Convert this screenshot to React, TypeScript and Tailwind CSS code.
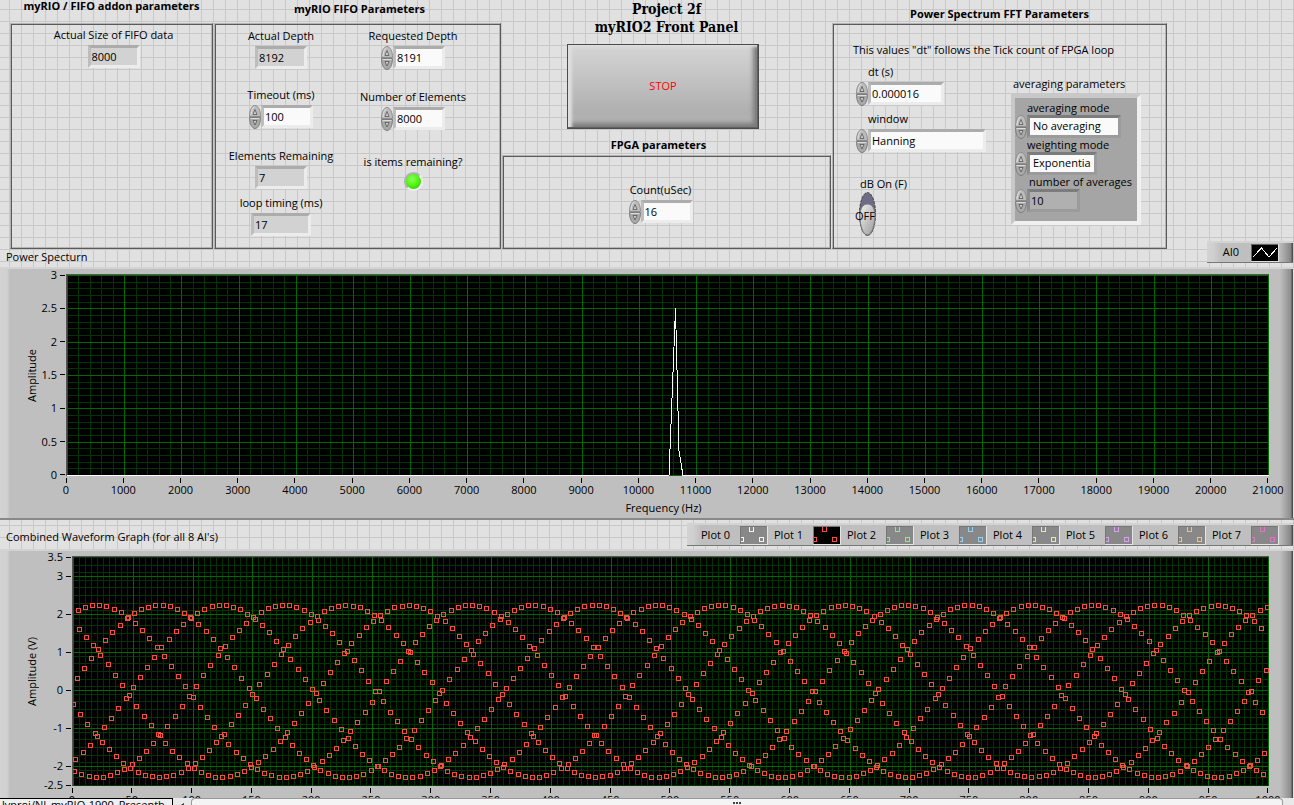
import { Fragment, useState } from 'react';
import type { ReactNode } from 'react';
import clsx from 'clsx';

const BEVEL = 'border-[3px] border-t-[#acacac] border-l-[#bdbdbd] border-r-[#ececec] border-b-[#ececec]';
const BEVEL_DARK = 'border-[3px] border-t-[#7c7c7c] border-l-[#8c8c8c] border-r-[#9b9b9b] border-b-[#9b9b9b]';

// ---------- controls ----------

function Spinner({ name }: { name: string }) {
  return (
    <span className="flex w-3 shrink-0 flex-col">
      <button aria-label={`Increase ${name}`} className="block h-3 w-3">
        <svg viewBox="0 0 12 12" className="block h-3 w-3">
          <path d="M.5 11.5C.5 5 3 .5 6 .5s5.500 4.500 5.500 11z" fill="#bcbcbc" stroke="#8d8d8d" />
          <path d="M2 10C2.300 5 4 2 5.500 1.800" fill="none" stroke="#e2e2e2" />
          <path d="M4 9.500 6 4.500 8 9.500z" fill="#cfcfcf" stroke="#555" strokeWidth=".8" />
        </svg>
      </button>
      <button aria-label={`Decrease ${name}`} className="block h-3 w-3">
        <svg viewBox="0 0 12 12" className="block h-3 w-3">
          <path d="M.5 .5C.5 7 3 11.500 6 11.500S11.500 7 11.500 .5z" fill="#a9a9a9" stroke="#7d7d7d" />
          <path d="M1.500 1.500h9" stroke="#dcdcdc" />
          <path d="M4 3.500 6 8 8 3.500z" fill="#cfcfcf" stroke="#555" strokeWidth=".8" />
        </svg>
      </button>
    </span>
  );
}

type FieldProps = {
  id: string;
  label: string;
  value: string;
  width?: string;
  spin?: boolean;
  readOnly?: boolean;
  className?: string;
};

function Field({ id, label, value, width = 'w-[52px]', spin, readOnly, className }: FieldProps) {
  const [text, setText] = useState(value);
  return (
    <div className={clsx('flex flex-col', className ?? 'items-center')}>
      <label htmlFor={id} className="mb-0.5 leading-4 whitespace-nowrap">{label}</label>
      <div className="flex h-[23px] items-center">
        {spin && <Spinner name={label} />}
        <input
          id={id}
          value={text}
          readOnly={readOnly}
          onChange={e => setText(e.target.value)}
          className={clsx('h-[23px] pl-px outline-none', BEVEL, width, readOnly ? 'bg-[#d2d2d2]' : 'bg-[#fafafa]')}
        />
      </div>
    </div>
  );
}

function ClusterSelect({ id, label, options, width }: { id: string; label: string; options: string[]; width: string }) {
  return (
    <div>
      <label htmlFor={id} className="ml-3 block leading-[14px]">{label}</label>
      <div className="flex h-[23px] items-center">
        <Spinner name={label} />
        <select id={id} className={clsx('h-[23px] appearance-none bg-[#fafafa] pl-[3px] outline-none', BEVEL_DARK, width)}>
          {options.map(o => <option key={o}>{o}</option>)}
        </select>
      </div>
    </div>
  );
}

function Panel({ title, titleClass, children }: { title: string; titleClass?: string; children?: ReactNode }) {
  return (
    <section className="flex flex-1 flex-col">
      <h2 className={clsx('h-[23px] text-center font-bold leading-3', titleClass)}>{title}</h2>
      <div className="flex-1 border border-t-[#b4b4b4] border-l-[#b4b4b4] border-r-[#5a5a5a] border-b-[#5a5a5a] shadow-[inset_1px_1px_#5a5a5a,inset_-1px_-1px_#b4b4b4]">
        {children}
      </div>
    </section>
  );
}

function DbSwitch() {
  const [on, setOn] = useState(false);
  return (
    <div className="mt-6 flex w-[54px] flex-col">
      <label htmlFor="db-on" className="ml-1 leading-4 whitespace-nowrap">dB On (F)</label>
      <label className="relative ml-[3px] block h-11 w-[17px]">
        <input id="db-on" type="checkbox" className="sr-only" checked={on} onChange={e => setOn(e.target.checked)} />
        <svg viewBox="0 0 17 44" className="block h-11 w-[17px]">
          <defs>
            <linearGradient id="knob" x1="0" x2="1" y1="0" y2="1">
              <stop offset="0" stopColor="#f0f0f0" />
              <stop offset="1" stopColor="#9a9a9a" />
            </linearGradient>
          </defs>
          <ellipse cx="8.500" cy="22" rx="8" ry="21.500" fill="#6c6c86" stroke="#444" strokeDasharray="3 1" />
          <path d={on ? 'M1 20C1 8 4 1 8.500 1S16 8 16 20 12 32 8.500 32 1 28 1 20' : 'M1 24C1 16 4 12 8.500 12S16 16 16 24 13 43 8.500 43 1 34 1 24'} fill="url(#knob)" stroke="#777" />
        </svg>
        <span className="absolute top-4 -left-1 leading-4">{on ? 'ON' : 'OFF'}</span>
      </label>
    </div>
  );
}

// ---------- graphs ----------

const range = (n: number) => Array.from({ length: n }, (_, i) => i);

type GraphProps = {
  yTitle: string;
  yTicks: number[];
  xTicks: number[];
  xTitle?: string;
  axisClass: string;
  plotClass: string;
  children: ReactNode;
};

function Graph({ yTitle, yTicks, xTicks, xTitle, axisClass, plotClass, children }: GraphProps) {
  return (
    <div className="flex border-t-2 border-[#d3d3d3] bg-[#bfbfbf] bg-[linear-gradient(to_right,#d3d3d3_0px,#d1d1d1_7px,#bfbfbf_10px,#bfbfbf_calc(100%_-_14px),#8c8c8c_calc(100%_-_3px),#505050_calc(100%_-_2px),#505050_calc(100%_-_1px),#e1e1e1_calc(100%_-_1px))] pr-[25px]">
      <div className={clsx('mt-[5px] flex shrink-0 items-center pl-6', axisClass, plotClass)}>
        <div className="flex w-4 shrink-0 items-center justify-center">
          <span className="rotate-180 leading-4 whitespace-nowrap [writing-mode:vertical-rl]">{yTitle}</span>
        </div>
        <div className="flex h-[calc(100%-2px)] flex-1 flex-col">
          {yTicks.map((v, i) => (
            <Fragment key={v}>
              {i > 0 && <div className="basis-0" style={{ flexGrow: yTicks[i - 1] - v }} />}
              <div className="flex h-0 items-center justify-end gap-[3px]">
                <span className="leading-4">{v}</span>
                <span className="mr-px h-px w-[5px] shrink-0 bg-black" />
              </div>
            </Fragment>
          ))}
        </div>
      </div>
      <div className="min-w-0 flex-1 pt-[5px]">
        <div className={clsx('border-t border-l border-[#555] bg-black', plotClass)}>{children}</div>
        <div className="mt-[2px] flex justify-between pr-px">
          {xTicks.map(v => (
            <div key={v} className="flex w-0 flex-col items-center">
              <span className="h-[5px] w-px shrink-0 bg-black" />
              <span className="leading-[14px]">{v}</span>
            </div>
          ))}
        </div>
        {xTitle && <p className="pt-[3px] pr-2 pb-[2px] text-center leading-4">{xTitle}</p>}
      </div>
    </div>
  );
}

function Grid({ w, h, nx, ny, everyX, everyY, offY = 0 }: { w: number; h: number; nx: number; ny: number; everyX: number; everyY: number; offY?: number }) {
  const vx = (i: number) => Math.round((i * w) / nx) + 0.5;
  const hy = (i: number) => Math.round((i * h) / ny) + 0.5;
  const major = (i: number) => (i - offY) % everyY === 0;
  const v = (keep: (i: number) => boolean) => range(nx + 1).filter(keep).map(i => `M${vx(i)} 0V${h + 1}`).join('');
  const hz = (keep: (i: number) => boolean) => range(ny + 1).filter(keep).map(i => `M0 ${hy(i)}H${w + 1}`).join('');
  return (
    <>
      <path d={v(i => i % everyX !== 0) + hz(i => !major(i))} stroke="#003400" />
      <path d={v(i => i % everyX === 0) + hz(major)} stroke="#006a00" />
    </>
  );
}

function SpectrumPlot() {
  return (
    <svg viewBox="0 0 1202 201" preserveAspectRatio="none" shapeRendering="crispEdges" className="block h-full w-full" fill="none">
      <Grid w={1201} h={200} nx={105} ny={30} everyX={5} everyY={5} />
      <path d="M0 200.500H602L608.500 33.500 612 176 616 200.500H1202" stroke="#fff" />
    </svg>
  );
}

// One sine tone sampled just above six points per cycle, so the dots weave into six strands.
const waveform = range(1000).map(n => {
  const t = 2 * Math.PI * (n * 0.169865 + 0.019);
  return -0.063 - 2.263 * Math.sin(t) - 0.037 * Math.cos(2 * t);
});

function WaveformPlot() {
  const dots = waveform
    .map((v, n) => `M${Math.round(n * 1.195) - 1.5} ${Math.round((3.5 - v) * 38) - 1.5}h4v4h-4z`)
    .join('');
  return (
    <svg viewBox="0 0 1196 229" preserveAspectRatio="none" shapeRendering="crispEdges" className="block h-full w-full" fill="none">
      <Grid w={1195} h={228} nx={200} ny={30} everyX={10} everyY={5} offY={2.5} />
      <path d={[3, 2, 1, 0, -1, -2].map(v => `M0 ${(3.5 - v) * 38 + 0.5}H1196`).join('')} stroke="#006a00" />
      <path d={dots} stroke="#ff4a42" />
    </svg>
  );
}

const LEGEND_BG =
  'flex items-center border-t-2 border-b border-t-[#d3d3d3] border-b-[#777] bg-[linear-gradient(to_right,#d3d3d3_0px,#d0d0d0_6px,#bfbfbf_14px,#bfbfbf_calc(100%_-_14px),#858585_calc(100%_-_2px),#505050_calc(100%_-_1px))]';

const PLOTS = [
  { name: 'Plot 0', color: '#f4f4f4' },
  { name: 'Plot 1', color: '#ff4a42' },
  { name: 'Plot 2', color: '#86f086' },
  { name: 'Plot 3', color: '#96d2f0' },
  { name: 'Plot 4', color: '#dcecae' },
  { name: 'Plot 5', color: '#dca0f0' },
  { name: 'Plot 6', color: '#f0c478' },
  { name: 'Plot 7', color: '#dc78c0' },
];

function PlotSwatch({ color, active }: { color: string; active: boolean }) {
  return (
    <svg viewBox="0 0 28 19" shapeRendering="crispEdges" className="block h-[19px] w-7" fill="none">
      <path d="M0 0h28v19H0z" fill={active ? '#000' : '#888'} />
      <path d="M.5 19V.5H28" stroke="#777" />
      <path d="M27.500 0V18.500H0" stroke="#e4e4e4" />
      <path d="M9.500 1V5.500H13.500V1M1 11.500H3.500V15.500H1M19.500 11.500h4v4h-4z" stroke={color} />
    </svg>
  );
}

export default function App() {
  return (
    <div className="flex h-screen flex-col overflow-hidden bg-[#e1e1e1] bg-[linear-gradient(to_right,#c8c8c8_1px,transparent_1px),linear-gradient(to_bottom,#c8c8c8_1px,transparent_1px)] bg-[size:12px_12px] bg-[position:9px_9px] font-['Open_Sans','Noto_Sans',sans-serif] text-[11px] text-black">
      <div className="grid h-[249px] shrink-0 grid-cols-[203px_287px_329px_335px] gap-px pl-[10px]">
        <Panel title="myRIO / FIFO addon parameters">
          <div className="pt-[3px] pl-1">
            <Field id="fifo-size" label="Actual Size of FIFO data" value="8000" readOnly />
          </div>
        </Panel>

        <Panel title="myRIO FIFO Parameters" titleClass="pt-[3px] pl-1">
          <div className="flex gap-5 pt-1 pl-3">
            <div className="flex w-[108px] flex-col">
              <Field id="actual-depth" label="Actual Depth" value="8192" readOnly />
              <div className="h-[18px]" />
              <Field id="timeout" label="Timeout (ms)" value="100" spin />
              <div className="h-5" />
              <Field id="remaining" label="Elements Remaining" value="7" readOnly />
              <div className="h-[6px]" />
              <Field id="loop-timing" label="loop timing (ms)" value="17" width="w-[60px]" readOnly />
            </div>
            <div className="flex w-[116px] flex-col">
              <Field id="req-depth" label="Requested Depth" value="8191" spin />
              <div className="h-5" />
              <Field id="elements" label="Number of Elements" value="8000" spin />
              <div className="h-6" />
              <div className="flex flex-col items-center">
                <span className="leading-4">is items remaining?</span>
                <span className="mt-0.5 h-[19px] w-[19px] rounded-full border-2 border-t-[#b0b0b0] border-l-[#b0b0b0] border-r-[#f0f0f0] border-b-[#f0f0f0] bg-[radial-gradient(circle_at_40%_35%,#8cff5a,#4cf50c_50%,#2fae06)]" />
              </div>
            </div>
          </div>
        </Panel>

        <div className="flex flex-col">
          <h1 className="text-center font-['DejaVu_Serif_Condensed','DejaVu_Serif',serif] text-[14px] leading-[18px] font-bold">
            Project 2f
            <br />
            myRIO2 Front Panel
          </h1>
          <div className="flex h-[103px] pt-2 pl-[65px]">
            <button className="h-[85px] w-[192px] border border-[#4c4c4c] bg-[linear-gradient(to_bottom,#d4d4d4,#cacaca_25%,#b0b0b0_80%,#b4b4b4)] text-[#ff0000] shadow-[inset_-1px_-1px_#606060,inset_4px_2px_3px_#dedede,inset_-5px_-5px_4px_#7c7c7c]">
              STOP
            </button>
          </div>
          <Panel title="FPGA parameters" titleClass="h-4! pr-4">
            <div className="pt-[26px] pr-3">
              <Field id="count" label="Count(uSec)" value="16" spin />
            </div>
          </Panel>
        </div>

        <Panel title="Power Spectrum FFT Parameters" titleClass="pt-2">
          <p className="pt-[18px] pl-5 leading-4">This values "dt" follows the Tick count of FPGA loop</p>
          <div className="flex justify-between pr-[25px] pl-[23px]">
            <div className="flex flex-col pt-[6px]">
              <Field id="dt" label="dt (s)" value="0.000016" width="w-[76px]" spin className="items-start [&>label]:ml-3" />
              <div className="h-[6px]" />
              <Field id="window" label="window" value="Hanning" width="w-[118px]" spin className="items-start [&>label]:ml-3" />
              <DbSwitch />
            </div>
            <fieldset aria-labelledby="averaging-title" className="pt-[18px]">
              <p id="averaging-title" className="pl-0.5 leading-4">averaging parameters</p>
              <div className="mt-0.5 h-[131px] w-[130px] border-4 border-t-[#c8c8c8] border-l-[#c8c8c8] border-r-[#f0f0f0] border-b-[#f0f0f0] bg-[#a5a5a5] pt-[3px]">
                <ClusterSelect id="avg-mode" label="averaging mode" options={['No averaging', 'Vector averaging', 'RMS averaging', 'Peak hold']} width="w-[94px]" />
                <ClusterSelect id="weight-mode" label="weighting mode" options={['Exponentia', 'Linear']} width="w-[70px]" />
                <label htmlFor="averages" className="ml-[14px] block leading-[14px] whitespace-nowrap">number of averages</label>
                <div className="flex h-[23px] items-center">
                  <Spinner name="number of averages" />
                  <input id="averages" defaultValue="10" className={clsx('h-[23px] w-[53px] bg-[#b0b0b0] pl-px outline-none', BEVEL_DARK)} />
                </div>
              </div>
            </fieldset>
          </div>
        </Panel>
      </div>

      <div className="flex h-[18px] shrink-0 items-end justify-between pr-px">
        <h2 className="self-start pl-1.5 leading-4">Power Specturn</h2>
        <div className={clsx('mb-1 h-[22px] w-[86px] justify-end gap-3 pr-[14px]', LEGEND_BG)}>
          <span>AI0</span>
          <svg viewBox="0 0 28 18" shapeRendering="crispEdges" className="block h-[18px] w-7" fill="none">
            <path d="M0 0h28v18H0z" fill="#000" />
            <path d="M.5 18V.5H28" stroke="#666" />
            <path d="M27.500 0V17.500H0" stroke="#ddd" />
            <path d="M2 13 10.500 4 18 13 26 4" stroke="#fff" />
          </svg>
        </div>
      </div>

      <div className="shrink-0 border-b-2 border-[#888]">
        <Graph
          yTitle="Amplitude"
          yTicks={[3, 2.5, 2, 1.5, 1, 0.5, 0]}
          xTicks={range(22).map(i => i * 1000)}
          xTitle="Frequency (Hz)"
          axisClass="w-[66px]"
          plotClass="h-[202px]"
        >
          <SpectrumPlot />
        </Graph>
      </div>

      <div className="flex h-[29px] shrink-0 items-end justify-between pr-px">
        <h2 className="pb-1 pl-1.5 leading-4">Combined Waveform Graph (for all 8 AI's)</h2>
        <div className={clsx('mb-[3px] h-[23px] gap-[6px] px-[14px]', LEGEND_BG)}>
          {PLOTS.map((p, i) => (
            <div key={p.name} className="flex w-[67px] items-center justify-between">
              <span className="whitespace-nowrap">{p.name}</span>
              <PlotSwatch color={p.color} active={i === 1} />
            </div>
          ))}
        </div>
      </div>

      <div className="min-h-0 flex-1 overflow-hidden">
        <Graph
          yTitle="Amplitude (V)"
          yTicks={[3.5, 3, 2, 1, 0, -1, -2, -2.5]}
          xTicks={range(21).map(i => i * 50)}
          axisClass="w-[72px]"
          plotClass="h-[230px]"
        >
          <WaveformPlot />
        </Graph>
      </div>

      <div className="flex h-[7px] shrink-0 overflow-hidden bg-[#e9e9e9]">
        <div className="w-[173px] overflow-hidden border-t border-r border-black bg-[#f0f0f0] pl-0.5 leading-[12px] whitespace-nowrap">
          lvproj/NI_myRIO-1900_Presentb
        </div>
        <svg viewBox="0 0 18 7" className="h-[7px] w-[18px]">
          <path d="M11 5 8 7h3z" fill="#333" />
        </svg>
        <div className="flex flex-1 items-end justify-center gap-px rounded-t-sm border border-b-0 border-[#999] bg-[#f4f4f4] pb-px">
          <span className="h-0.5 w-0.5 bg-[#444]" />
          <span className="h-0.5 w-0.5 bg-[#444]" />
          <span className="h-0.5 w-0.5 bg-[#444]" />
        </div>
        <div className="w-[11px]" />
      </div>
    </div>
  );
}
